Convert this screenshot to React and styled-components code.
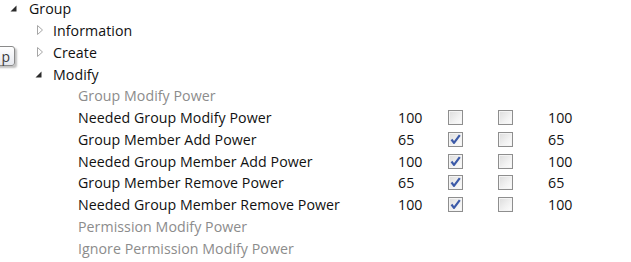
import styled, { createGlobalStyle } from 'styled-components'

const GlobalStyle = createGlobalStyle`
  html, body {
    margin: 0;
    padding: 0;
    background: #ffffff;
  }
  body {
    font-family: "Open Sans", "Noto Sans", sans-serif;
    font-size: 14.2px;
    letter-spacing: 0.05px;
    color: #111111;
  }
`

const Tree = styled.div`
  position: relative;
  display: flex;
  flex-direction: column;
  width: 631px;
  height: 262px;
  overflow: hidden;
  margin-top: -3px;
`

const Row = styled.div`
  display: flex;
  align-items: center;
  height: 22px;
  padding-left: ${p => p.$indent}px;
`

const Expander = styled.span`
  display: flex;
  align-items: center;
  justify-content: center;
  width: 10px;
  height: 22px;
  margin-right: ${p => p.$gap}px;
`

const Label = styled.span`
  white-space: nowrap;
  color: ${p => (p.$muted ? '#8c8c8c' : '#111111')};
`

const LeafRow = styled.div`
  display: grid;
  grid-template-columns: 320px 50px 50px 50px 60px;
  align-items: center;
  height: 22px;
  padding-left: 78px;
`

const Value = styled.span`
  white-space: nowrap;
`

const CheckBox = styled.span`
  box-sizing: border-box;
  display: flex;
  align-items: center;
  justify-content: center;
  width: 15px;
  height: 15px;
  border: 1px solid #8e8e8e;
  background: linear-gradient(135deg, #dcdcdc 0%, #f2f2f2 60%, #fdfdfd 100%);
  box-shadow: inset 0 0 0 1px #f4f4f4;
`

const Tip = styled.div`
  position: absolute;
  left: -14px;
  top: 49px;
  width: 29px;
  height: 20px;
  box-sizing: border-box;
  border: 1px solid #8a8a8a;
  border-radius: 3px;
  background: linear-gradient(#ffffff, #e6e8ee);
  box-shadow: 2px 2px 2px rgba(0, 0, 0, 0.25);
  display: flex;
  align-items: center;
  justify-content: flex-end;
  padding-right: 4px;
  font-size: 14px;
  color: #3b3b3b;
`

const Filled = () => (
  <svg width="7" height="7" viewBox="0 0 7 7">
    <path d="M6.5 0.5 L6.5 6.5 L0.5 6.5 Z" fill="#2b2b2b" />
  </svg>
)

const Hollow = () => (
  <svg width="6" height="10" viewBox="0 0 6 10">
    <path d="M0.5 0.5 L5.5 5 L0.5 9.5 Z" fill="#ffffff" stroke="#a6a6a6" strokeWidth="1" />
  </svg>
)

const Check = () => (
  <svg width="11" height="11" viewBox="0 0 11 11">
    <path d="M1.5 5.5 L4 8.8 L9.8 1.2" fill="none" stroke="#3c5aa8" strokeWidth="2.2" strokeLinejoin="round" />
  </svg>
)

const leaves = [
  { label: 'Group Modify Power', muted: true },
  { label: 'Needed Group Modify Power', a: 100, c1: false, c2: false, b: 100 },
  { label: 'Group Member Add Power', a: 65, c1: true, c2: false, b: 65 },
  { label: 'Needed Group Member Add Power', a: 100, c1: true, c2: false, b: 100 },
  { label: 'Group Member Remove Power', a: 65, c1: true, c2: false, b: 65 },
  { label: 'Needed Group Member Remove Power', a: 100, c1: true, c2: false, b: 100 },
  { label: 'Permission Modify Power', muted: true },
  { label: 'Ignore Permission Modify Power', muted: true },
]

const App = () => {
  return (
    <>
      <GlobalStyle />
      <Tree>
        <Row $indent={8}>
          <Expander $gap={11}><Filled /></Expander>
          <Label>Group</Label>
        </Row>
        <Row $indent={35}>
          <Expander $gap={8}><Hollow /></Expander>
          <Label>Information</Label>
        </Row>
        <Row $indent={35}>
          <Expander $gap={8}><Hollow /></Expander>
          <Label>Create</Label>
        </Row>
        <Row $indent={33}>
          <Expander $gap={10}><Filled /></Expander>
          <Label>Modify</Label>
        </Row>
        {leaves.map(l =>
          l.muted ? (
            <LeafRow key={l.label}>
              <Label $muted>{l.label}</Label>
            </LeafRow>
          ) : (
            <LeafRow key={l.label}>
              <Label>{l.label}</Label>
              <Value>{l.a}</Value>
              <CheckBox>{l.c1 && <Check />}</CheckBox>
              <CheckBox>{l.c2 && <Check />}</CheckBox>
              <Value>{l.b}</Value>
            </LeafRow>
          )
        )}
        <Tip>p</Tip>
      </Tree>
    </>
  )
}

export default App
